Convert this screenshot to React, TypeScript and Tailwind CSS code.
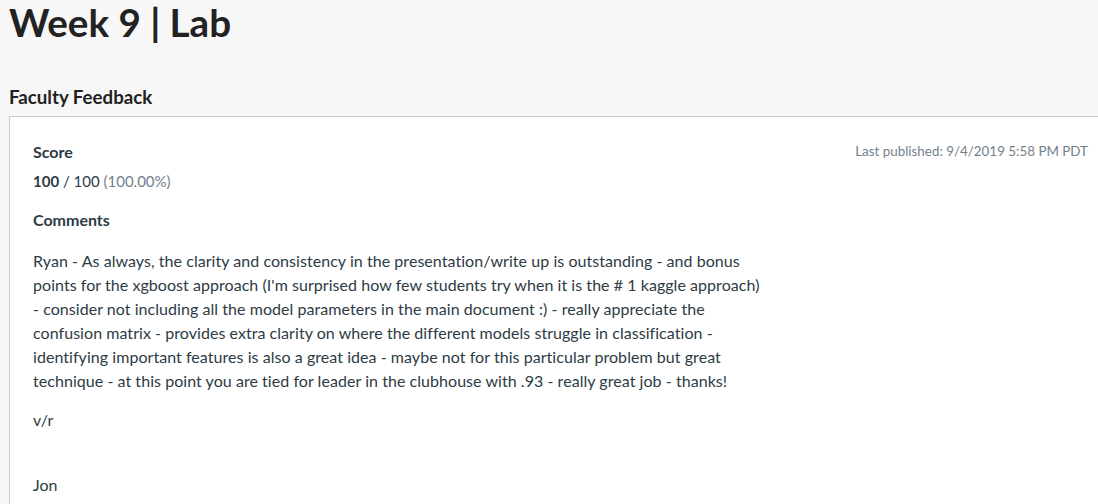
import React from "react";

const lines = [
  "Ryan - As always, the clarity and consistency in the presentation/write up is outstanding - and bonus",
  "points for the xgboost approach (I'm surprised how few students try when it is the # 1 kaggle approach)",
  "- consider not including all the model parameters in the main document :) - really appreciate the",
  "confusion matrix - provides extra clarity on where the different models struggle in classification -",
  "identifying important features is also a great idea - maybe not for this particular problem but great",
  "technique - at this point you are tied for leader in the clubhouse with .93 - really great job - thanks!",
];

export default function App() {
  return (
    <div
      className="h-[504px] w-[1098px] overflow-hidden bg-[#f7f7f7] text-[#2d3b45]"
      style={{ fontFamily: "Lato, 'Open Sans', sans-serif" }}
    >
      <h1 className="pl-[9px] text-[38.6px] font-bold leading-[44px] text-[#222]">Week 9 | Lab</h1>
      <h2 className="mt-[42px] pl-[9px] text-[18.7px] font-bold leading-[22px] text-[#222]">Faculty Feedback</h2>
      <div className="ml-[9px] mt-[8px] border border-r-0 border-[#c7cdd1] bg-white pl-[23px] pr-[10px] pt-[24px]">
        <div className="flex items-start justify-between">
          <div>
            <div className="text-[16px] font-bold leading-[22px]">Score</div>
            <div className="mt-[7px] text-[15px] leading-[22px]">
              <span className="font-bold">100</span> / 100 <span className="text-[#73818c]">(100.00%)</span>
            </div>
          </div>
          <div className="text-[13.4px] leading-[20px] text-[#73818c]">Last published: 9/4/2019 5:58 PM PDT</div>
        </div>
        <div className="mt-[17px] text-[16px] font-bold leading-[22px]">Comments</div>
        <p className="mt-[18px] text-[16px] tracking-[0.05px] leading-[24px]">
          {lines.map((l, i) => (
            <React.Fragment key={i}>
              {l}
              {i < lines.length - 1 && <br />}
            </React.Fragment>
          ))}
        </p>
        <p className="mt-[15px] text-[16px] leading-[24px]">v/r</p>
        <p className="mt-[41px] pb-[20px] text-[16px] leading-[24px]">Jon</p>
      </div>
    </div>
  );
}
